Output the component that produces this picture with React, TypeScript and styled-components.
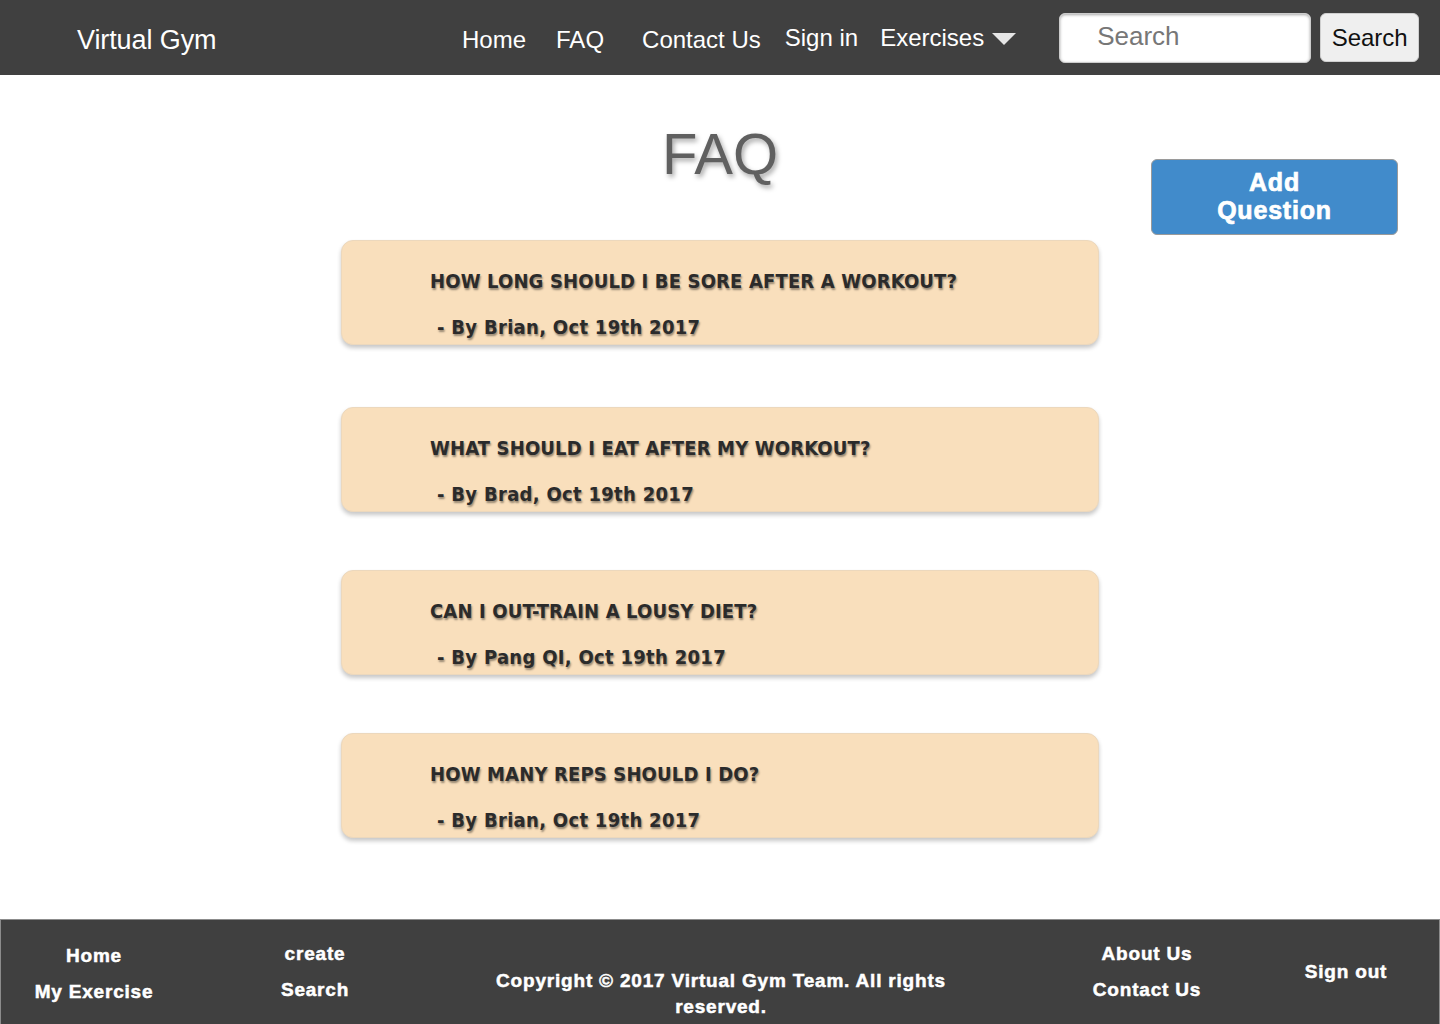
import React from 'react';
import styled, { createGlobalStyle } from 'styled-components';

const GlobalStyle = createGlobalStyle`
  html, body {
    margin: 0;
    padding: 0;
    background: #ffffff;
  }
  #root {
    min-height: 1024px;
    display: flex;
    flex-direction: column;
  }
`;

const Page = styled.div`
  display: flex;
  flex-direction: column;
  min-height: 1024px;
  font-family: 'Liberation Sans', Arial, sans-serif;
`;

const NavBar = styled.header`
  height: 75px;
  background-color: #404040;
  display: flex;
  align-items: center;
  padding: 0 0 0 77px;
  box-sizing: border-box;
  white-space: nowrap;
`;

const Brand = styled.div`
  color: #ffffff;
  font-size: 27px;
  letter-spacing: -0.1px;
  margin-top: 6px;
  width: 385px;
  flex-shrink: 0;
`;

const NavLinks = styled.nav`
  display: flex;
  align-items: center;
  flex-shrink: 0;
`;

const NavLink = styled.a<{ $gap: number; $lift?: boolean }>`
  color: #ffffff;
  font-size: 24px;
  text-decoration: none;
  white-space: nowrap;
  flex-shrink: 0;
  margin-right: ${({ $gap }) => $gap}px;
  margin-top: ${({ $lift }) => ($lift ? '0' : '4px')};
  display: flex;
  align-items: center;
  gap: 8px;
`;

const Caret = styled.span`
  width: 0;
  height: 0;
  border-left: 12px solid transparent;
  border-right: 12px solid transparent;
  border-top: 12px solid #e6e6e6;
  margin-top: 3px;
`;

const SearchForm = styled.form`
  display: flex;
  align-items: center;
  gap: 9px;
  margin: 0 0 0 43px;
  flex-shrink: 0;
`;

const SearchInput = styled.input`
  width: 252px;
  height: 50px;
  box-sizing: border-box;
  border: 1px solid #cccccc;
  border-radius: 6px;
  background: #ffffff;
  box-shadow: inset 0 1px 3px rgba(0, 0, 0, 0.35);
  padding: 0 0 2px 37px;
  font-family: 'Liberation Sans', Arial, sans-serif;
  font-size: 26px;
  outline: none;
  &::placeholder {
    color: #777777;
  }
`;

const SearchButton = styled.button`
  width: 99px;
  height: 49px;
  border: 1px solid #cfcfcf;
  border-radius: 6px;
  background: #efefef;
  color: #111111;
  font-family: 'Liberation Sans', Arial, sans-serif;
  font-size: 24px;
  padding: 0;
`;

const Main = styled.main`
  flex: 1;
  display: grid;
  grid-template-columns: 341px 758px 1fr;
  padding-bottom: 81px;
`;

const Center = styled.section`
  grid-column: 2;
  display: flex;
  flex-direction: column;
`;

const Title = styled.h1`
  margin: 46px 0 53px;
  text-align: center;
  font-size: 58px;
  font-weight: 400;
  line-height: 66px;
  color: #606060;
  text-shadow: 2px 3px 5px rgba(0, 0, 0, 0.35);
`;

const Aside = styled.aside`
  grid-column: 3;
  padding: 84px 0 0 52px;
`;

const AddButton = styled.button`
  width: 247px;
  height: 76px;
  background-color: #418bcb;
  border: 1px solid #9a9a9a;
  border-radius: 6px;
  color: #ffffff;
  font-family: 'Liberation Sans', Arial, sans-serif;
  font-weight: 700;
  font-size: 25px;
  line-height: 28px;
  letter-spacing: 0.8px;
  padding: 0 0 2px;
  -webkit-text-stroke: 0.7px #ffffff;
`;

const QuestionList = styled.div`
  display: flex;
  flex-direction: column;
  gap: 58px;
`;

const Card = styled.article`
  height: 105px;
  box-sizing: border-box;
  background-color: #f9dfbc;
  border: 1px solid #ecd8bd;
  border-radius: 12px;
  box-shadow: 0 3px 4px rgba(0, 0, 0, 0.22);
  padding: 26px 0 0 88px;
  font-family: 'DejaVu Sans Condensed', 'DejaVu Sans', sans-serif;
  font-weight: 700;
  color: #2b2b2b;
  text-shadow: 1px 2px 2px rgba(0, 0, 0, 0.4);

  &:first-child {
    margin-bottom: 4px;
  }
`;

const Question = styled.h2`
  margin: 0;
  font-size: 20px;
  font-weight: 700;
  line-height: 28px;
  letter-spacing: 0.15px;
`;

const Byline = styled.p`
  margin: 18px 0 0 7px;
  font-size: 20px;
  line-height: 28px;
  letter-spacing: 0.3px;
`;

const Footer = styled.footer`
  height: 105px;
  box-sizing: border-box;
  background-color: #404040;
  border: 1px solid #8c8c8c;
  border-bottom: none;
  display: grid;
  grid-template-columns: 186px 256px 556px 296px 1fr;
  align-items: center;
  font-family: 'Liberation Sans', Arial, sans-serif;
  font-weight: 700;
  font-size: 19px;
  color: #ffffff;
  letter-spacing: 0.8px;
  -webkit-text-stroke: 0.5px #ffffff;
`;

const FooterColumn = styled.div<{ $gap: number; $offset: number; $trail?: number }>`
  display: flex;
  flex-direction: column;
  align-items: center;
  gap: ${({ $gap }) => $gap}px;
  margin-top: ${({ $offset }) => $offset}px;
  padding-right: ${({ $trail }) => $trail ?? 0}px;
`;

const FooterLink = styled.a`
  color: #ffffff;
  text-decoration: none;
  line-height: 20px;
`;

const Copyright = styled.p`
  margin: 44px 0 0;
  text-align: center;
  line-height: 26px;
  padding: 0 20px;
`;

const questions = [
  { title: 'HOW LONG SHOULD I BE SORE AFTER A WORKOUT?', by: 'Brian' },
  { title: 'WHAT SHOULD I EAT AFTER MY WORKOUT?', by: 'Brad' },
  { title: 'CAN I OUT-TRAIN A LOUSY DIET?', by: 'Pang QI' },
  { title: 'HOW MANY REPS SHOULD I DO?', by: 'Brian' },
];

const App = () => {
  return (
    <Page>
      <GlobalStyle />
      <NavBar>
        <Brand>Virtual Gym</Brand>
        <NavLinks>
          <NavLink $gap={30}>Home</NavLink>
          <NavLink $gap={38}>FAQ</NavLink>
          <NavLink $gap={24}>Contact Us</NavLink>
          <NavLink $gap={22} $lift>Sign in</NavLink>
          <NavLink $gap={0} $lift>
            Exercises
            <Caret />
          </NavLink>
        </NavLinks>
        <SearchForm onSubmit={(e) => e.preventDefault()}>
          <SearchInput placeholder="Search" />
          <SearchButton type="submit">Search</SearchButton>
        </SearchForm>
      </NavBar>

      <Main>
        <Center>
          <Title>FAQ</Title>
          <QuestionList>
            {questions.map((q, index) => (
              <Card key={index}>
                <Question>{q.title}</Question>
                <Byline>- By {q.by}, Oct 19th 2017</Byline>
              </Card>
            ))}
          </QuestionList>
        </Center>
        <Aside>
          <AddButton>
            Add
            <br />
            Question
          </AddButton>
        </Aside>
      </Main>

      <Footer>
        <FooterColumn $gap={16} $offset={4}>
          <FooterLink>Home</FooterLink>
          <FooterLink>My Exercise</FooterLink>
        </FooterColumn>
        <FooterColumn $gap={16} $offset={0}>
          <FooterLink>create</FooterLink>
          <FooterLink>Search</FooterLink>
        </FooterColumn>
        <Copyright>Copyright © 2017 Virtual Gym Team. All rights reserved.</Copyright>
        <FooterColumn $gap={16} $offset={0}>
          <FooterLink>About Us</FooterLink>
          <FooterLink>Contact Us</FooterLink>
        </FooterColumn>
        <FooterColumn $gap={0} $offset={0} $trail={42}>
          <FooterLink>Sign out</FooterLink>
        </FooterColumn>
      </Footer>
    </Page>
  );
};

export default App;
